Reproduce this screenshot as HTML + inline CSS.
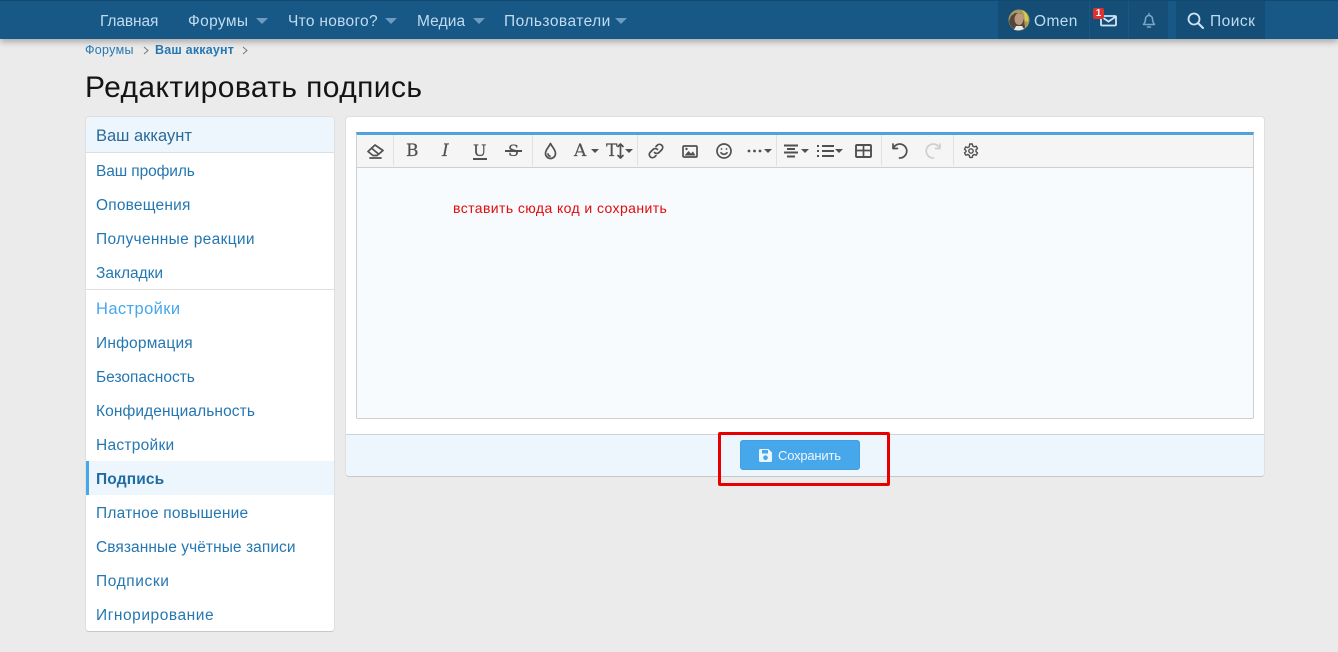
<!DOCTYPE html>
<html lang="ru"><head><meta charset="utf-8"><title>Редактировать подпись</title>
<style>
html,body{margin:0;padding:0;width:1338px;height:652px;overflow:hidden;background:#ebebeb;font-family:"Liberation Sans","DejaVu Sans",sans-serif}
.a{position:absolute;white-space:nowrap}
.box{position:absolute;box-sizing:border-box}
.n{color:#bfdcf2;font-size:15.5px;top:13px;line-height:18px}
.ar{position:absolute;top:18px;width:0;height:0;border-left:6px solid transparent;border-right:6px solid transparent;border-top:6px solid #6d9cc0}
.m{color:#2577b1;font-size:15.5px;left:96px;line-height:20px}
.sep{position:absolute;top:135px;width:1px;height:31px;background:#e1e1e1}
svg{position:absolute;overflow:visible}
.i{fill:none;stroke:#505050;stroke-width:1.7;stroke-linecap:round;stroke-linejoin:round}
.c{position:absolute;width:0;height:0;border-left:4px solid transparent;border-right:4px solid transparent;border-top:4px solid #505050;top:149px}
.t{position:absolute;font-family:"DejaVu Serif","Liberation Serif",serif;color:#505050;line-height:20px;top:141px;-webkit-text-stroke:.2px #505050}
</style></head><body>
<!-- header -->
<div class="box" style="left:0;top:0;width:1338px;height:39px;background:#185886;box-shadow:0 3px 6px rgba(0,0,0,.28);border-top:1px solid #14496f"></div>
<div class="a n" style="left:100px;letter-spacing:-.1px">Главная</div>
<div class="a n" style="left:188px;letter-spacing:.35px">Форумы</div><div class="ar" style="left:256px"></div>
<div class="a n" style="left:288px;letter-spacing:.3px">Что нового?</div><div class="ar" style="left:385px"></div>
<div class="a n" style="left:417px;letter-spacing:.1px">Медиа</div><div class="ar" style="left:473px"></div>
<div class="a n" style="left:504px;letter-spacing:.47px">Пользователи</div><div class="ar" style="left:615px"></div>
<div class="box" style="left:998px;top:1px;width:91px;height:38px;background:#144d75"></div>
<div class="box" style="left:1090px;top:1px;width:38px;height:38px;background:#154f78"></div>
<div class="box" style="left:1129px;top:1px;width:39px;height:38px;background:#154f78"></div>
<div class="box" style="left:1176px;top:1px;width:89px;height:38px;background:#144d75"></div>
<svg style="left:1008px;top:9px" width="22" height="22" viewBox="0 0 22 22"><circle cx="11" cy="11" r="10.500" fill="#a89a5c"/><path d="M1 12a10 10 0 0 0 16 7l-1-8-3-7H7L3 7z" fill="#54463a"/><ellipse cx="11" cy="10" rx="4.500" ry="6" fill="#b99a80"/><path d="M6 21l2-4h6l2 3-5 1.500z" fill="#e9e9e4"/><path d="M14 1a10 10 0 0 1 6 12l-3-1-1-7z" fill="#d8c64f"/></svg>
<div class="a n" style="left:1034px;letter-spacing:.4px">Omen</div>
<svg style="left:1100px;top:15px" width="17" height="11" viewBox="0 0 17 11"><rect x="1" y="1" width="15" height="9.500" rx="1" fill="none" stroke="#cfe5f6" stroke-width="1.800"/><path d="M1 1.500l7.500 5L16 1.500" fill="none" stroke="#cfe5f6" stroke-width="1.800"/></svg>
<div class="box" style="left:1093px;top:8px;width:11px;height:11px;background:#e03030;border-radius:2px;color:#fff;font:bold 10px/11px 'Liberation Sans',sans-serif;text-align:center">1</div>
<svg style="left:1141px;top:12px" width="16" height="17" viewBox="0 0 16 17"><path d="M8 1.500v1M2.500 12.500c1-1.500 2-2.500 2-5.500a3.500 3.500 0 0 1 7 0c0 3 1 4 2 5.500zM6.500 15h3" fill="none" stroke="#7fa6c4" stroke-width="1.500" stroke-linecap="round" stroke-linejoin="round"/></svg>
<svg style="left:1187px;top:12px" width="17" height="17" viewBox="0 0 17 17"><circle cx="7" cy="7" r="5.500" fill="none" stroke="#cfe5f6" stroke-width="1.800"/><path d="M11 11l5 5" stroke="#cfe5f6" stroke-width="2" stroke-linecap="round"/></svg>
<div class="a n" style="left:1210px;letter-spacing:.5px">Поиск</div>
<!-- breadcrumb -->
<div class="a" style="left:85px;top:43px;font-size:12.5px;line-height:15px;color:#2577b1;letter-spacing:.3px">Форумы</div>
<svg style="left:142px;top:46px" width="8" height="9"><path d="M2 1l4 3.500L2 8" fill="none" stroke="#777" stroke-width="1"/></svg>
<div class="a" style="left:155px;top:43px;font-size:12.5px;line-height:15px;font-weight:bold;color:#2577b1;letter-spacing:.2px">Ваш аккаунт</div>
<svg style="left:241px;top:46px" width="8" height="9"><path d="M2 1l4 3.500L2 8" fill="none" stroke="#777" stroke-width="1"/></svg>
<div class="a" style="left:85px;top:71px;font-size:30px;line-height:33px;color:#141414;letter-spacing:.4px">Редактировать подпись</div>
<!-- sidebar -->
<div class="box" style="left:85px;top:116px;width:250px;height:516px;background:#fff;border:1px solid #dfdfdf;border-bottom-color:#c8c8c8;border-radius:4px"></div>
<div class="box" style="left:86px;top:117px;width:248px;height:36px;background:#edf6fd;border-bottom:1px solid #dfdfdf;border-radius:3px 3px 0 0"></div>
<div class="a" style="left:96px;top:126px;font-size:16.5px;line-height:20px;color:#2a6a99">Ваш аккаунт</div>
<div class="a m" style="top:162px;letter-spacing:-.1px">Ваш профиль</div>
<div class="a m" style="top:196px;letter-spacing:.2px">Оповещения</div>
<div class="a m" style="top:230px;letter-spacing:.33px">Полученные реакции</div>
<div class="a m" style="top:264px">Закладки</div>
<div class="box" style="left:86px;top:289px;width:248px;height:1px;background:#dfdfdf"></div>
<div class="a" style="left:96px;top:299px;font-size:16.5px;line-height:20px;color:#47a7eb;letter-spacing:.4px">Настройки</div>
<div class="a m" style="top:334px;letter-spacing:.2px">Информация</div>
<div class="a m" style="top:368px">Безопасность</div>
<div class="a m" style="top:402px;letter-spacing:.1px">Конфиденциальность</div>
<div class="a m" style="top:436px;letter-spacing:.27px">Настройки</div>
<div class="box" style="left:86px;top:461px;width:248px;height:34px;background:#edf6fd;border-left:3px solid #47a7eb"></div>
<div class="a m" style="top:470px;font-weight:bold;color:#1f6ca3;letter-spacing:.15px">Подпись</div>
<div class="a m" style="top:504px;letter-spacing:.2px">Платное повышение</div>
<div class="a m" style="top:538px;letter-spacing:.07px">Связанные учётные записи</div>
<div class="a m" style="top:572px;letter-spacing:.6px">Подписки</div>
<div class="a m" style="top:606px;letter-spacing:.55px">Игнорирование</div>
<!-- main -->
<div class="box" style="left:345px;top:116px;width:920px;height:361px;background:#fff;border:1px solid #dfdfdf;border-bottom-color:#c8c8c8;border-radius:4px"></div>
<div class="box" style="left:346px;top:434px;width:918px;height:42px;background:#edf6fd;border-top:1px solid #cfd3d6;border-radius:0 0 3px 3px"></div>
<div class="box" style="left:356px;top:132px;width:898px;height:287px;background:#f8fbfe;border:1px solid #cfcfcf;border-top:3px solid #4ea3dd;border-radius:0 0 2px 2px"></div>
<div class="box" style="left:357px;top:135px;width:896px;height:33px;background:#f5f5f5;border-bottom:1px solid #cfcfcf"></div>
<div class="sep" style="left:393px"></div><div class="sep" style="left:532px"></div><div class="sep" style="left:637px"></div><div class="sep" style="left:776px"></div><div class="sep" style="left:881px"></div><div class="sep" style="left:953px"></div>
<svg class="i" style="left:367px;top:143px" width="17" height="16" viewBox="0 0 17 16"><path d="M1 8.500L8 2l8 5.500-6 5H6zM5 5.500l6.500 5.500M3 15h11"/></svg>
<div class="t" style="left:406px;font-size:17px">B</div>
<div class="t" style="left:442px;font-size:17px;font-style:italic">I</div>
<div class="t" style="left:473px;font-size:16px">U</div>
<div class="box" style="left:473px;top:158px;width:14px;height:1.500px;background:#505050"></div>
<div class="t" style="left:508px;font-size:16px">S</div>
<div class="box" style="left:505px;top:150px;width:17px;height:1.500px;background:#505050"></div>
<svg class="i" style="left:544px;top:142px" width="13" height="18" viewBox="0 0 13 18"><path d="M6.500 1.500C5 5 1.500 7.500 1.500 11.500a5 5 0 0 0 10 0C11.500 7.500 8 5 6.500 1.500zM4 12c.2 1.300 1 2 2 2.200"/></svg>
<div class="t" style="left:574px;font-size:17px">A</div><div class="c" style="left:591px"></div>
<div class="t" style="left:606px;font-size:17px">T</div>
<svg class="i" style="left:617px;top:143px" width="7" height="16" viewBox="0 0 7 16"><path d="M3.500 1v14M1 3.500L3.500 1 6 3.500M1 12.500L3.500 15 6 12.500"/></svg><div class="c" style="left:625px"></div>
<svg class="i" style="left:647px;top:142px" width="18" height="18" viewBox="0 0 18 18"><path d="M7.500 10.500a3.200 3.200 0 0 0 4.500 0l3-3a3.200 3.200 0 0 0-4.500-4.500L9 4.500M10.500 7.500a3.200 3.200 0 0 0-4.500 0l-3 3A3.200 3.200 0 0 0 7.500 15L9 13.500"/></svg>
<svg class="i" style="left:682px;top:145px" width="16" height="13" viewBox="0 0 16 13"><rect x="1" y="1" width="14" height="11" rx="1"/><path d="M2.500 10.500l4-4.500 2.500 2.500 2-2 2.500 4z" fill="#505050" stroke="none"/><circle cx="4.500" cy="4" r="1.200" fill="#505050" stroke="none"/></svg>
<svg class="i" style="left:716px;top:143px" width="16" height="16" viewBox="0 0 16 16"><circle cx="8" cy="8" r="7"/><path d="M5 9.800c1.500 2 4.500 2 6 0"/><circle cx="5.500" cy="6" r=".9" fill="#505050" stroke="none"/><circle cx="10.500" cy="6" r=".9" fill="#505050" stroke="none"/></svg>
<svg style="left:747px;top:149px" width="16" height="4" viewBox="0 0 16 4"><circle cx="2" cy="2" r="1.400" fill="#505050"/><circle cx="7.500" cy="2" r="1.400" fill="#505050"/><circle cx="13" cy="2" r="1.400" fill="#505050"/></svg><div class="c" style="left:764px"></div>
<svg class="i" style="left:784px;top:144px" width="14" height="14" viewBox="0 0 14 14"><path d="M0 1.500h14M3 5h8M0 8.500h14M3 12.500h8" stroke-linecap="butt" stroke-width="1.900"/></svg><div class="c" style="left:801px"></div>
<svg class="i" style="left:817px;top:144px" width="17" height="14" viewBox="0 0 17 14"><path d="M5 2h12M5 7h12M5 12h12" stroke-linecap="butt" stroke-width="1.900"/><path d="M0 2h2M0 7h2M0 12h2" stroke-width="2" stroke-linecap="butt"/></svg><div class="c" style="left:835px"></div>
<svg class="i" style="left:855px;top:144px" width="17" height="14" viewBox="0 0 17 14"><rect x="1" y="1" width="15" height="12" rx="1" stroke-width="1.900"/><path d="M1 6.500h15M8.500 1v12" stroke-width="1.700"/></svg>
<svg class="i" style="left:891px;top:142px" width="17" height="17" viewBox="0 0 17 17"><path d="M2 2v4.500h4.500M2.300 6.300A7 7 0 1 1 8.500 16"/></svg>
<svg class="i" style="left:925px;top:142px;stroke:#cfcfcf" width="17" height="17" viewBox="0 0 17 17"><path d="M15 2v4.500h-4.500M14.700 6.300A7 7 0 1 0 8.500 16"/></svg>
<svg class="i" style="left:963px;top:143px" width="16" height="16" viewBox="0 0 16 16"><path d="M6.700 1h2.600l.4 2 1.600.9 1.900-.7 1.300 2.300-1.500 1.300v1.800l1.500 1.300-1.300 2.300-1.900-.7-1.600.9-.4 2H6.700l-.4-2-1.600-.9-1.900.7-1.300-2.300 1.500-1.300V7.500L1.500 6.200l1.300-2.300 1.900.7 1.600-.9z" stroke-width="1.400"/><circle cx="8" cy="8" r="2.200" stroke-width="1.400"/></svg>
<div class="a" style="left:453px;top:200px;font-size:14px;line-height:17px;color:#e00b0b;letter-spacing:.41px">вставить сюда код и сохранить</div>
<!-- button -->
<div class="box" style="left:740px;top:440px;width:120px;height:30px;background:#47a7eb;border-radius:3px;border:1px solid #43a0e0"></div>
<svg style="left:758px;top:448px" width="15" height="15" viewBox="0 0 15 15"><path d="M1 2.500A1.500 1.500 0 0 1 2.500 1h8L14 4.500v8a1.500 1.500 0 0 1-1.500 1.500h-10A1.500 1.500 0 0 1 1 12.500z" fill="#eaf5fd"/><rect x="4" y="2" width="6" height="3.500" fill="#47a7eb"/><circle cx="7.500" cy="9.700" r="2.300" fill="#47a7eb"/></svg>
<div class="a" style="left:778px;top:447px;font-size:13px;line-height:17px;color:#eef7fe;letter-spacing:-.2px">Сохранить</div>
<div class="box" style="left:718px;top:432px;width:172px;height:54px;border:3px solid #e80000;border-radius:2px"></div>
</body></html>
